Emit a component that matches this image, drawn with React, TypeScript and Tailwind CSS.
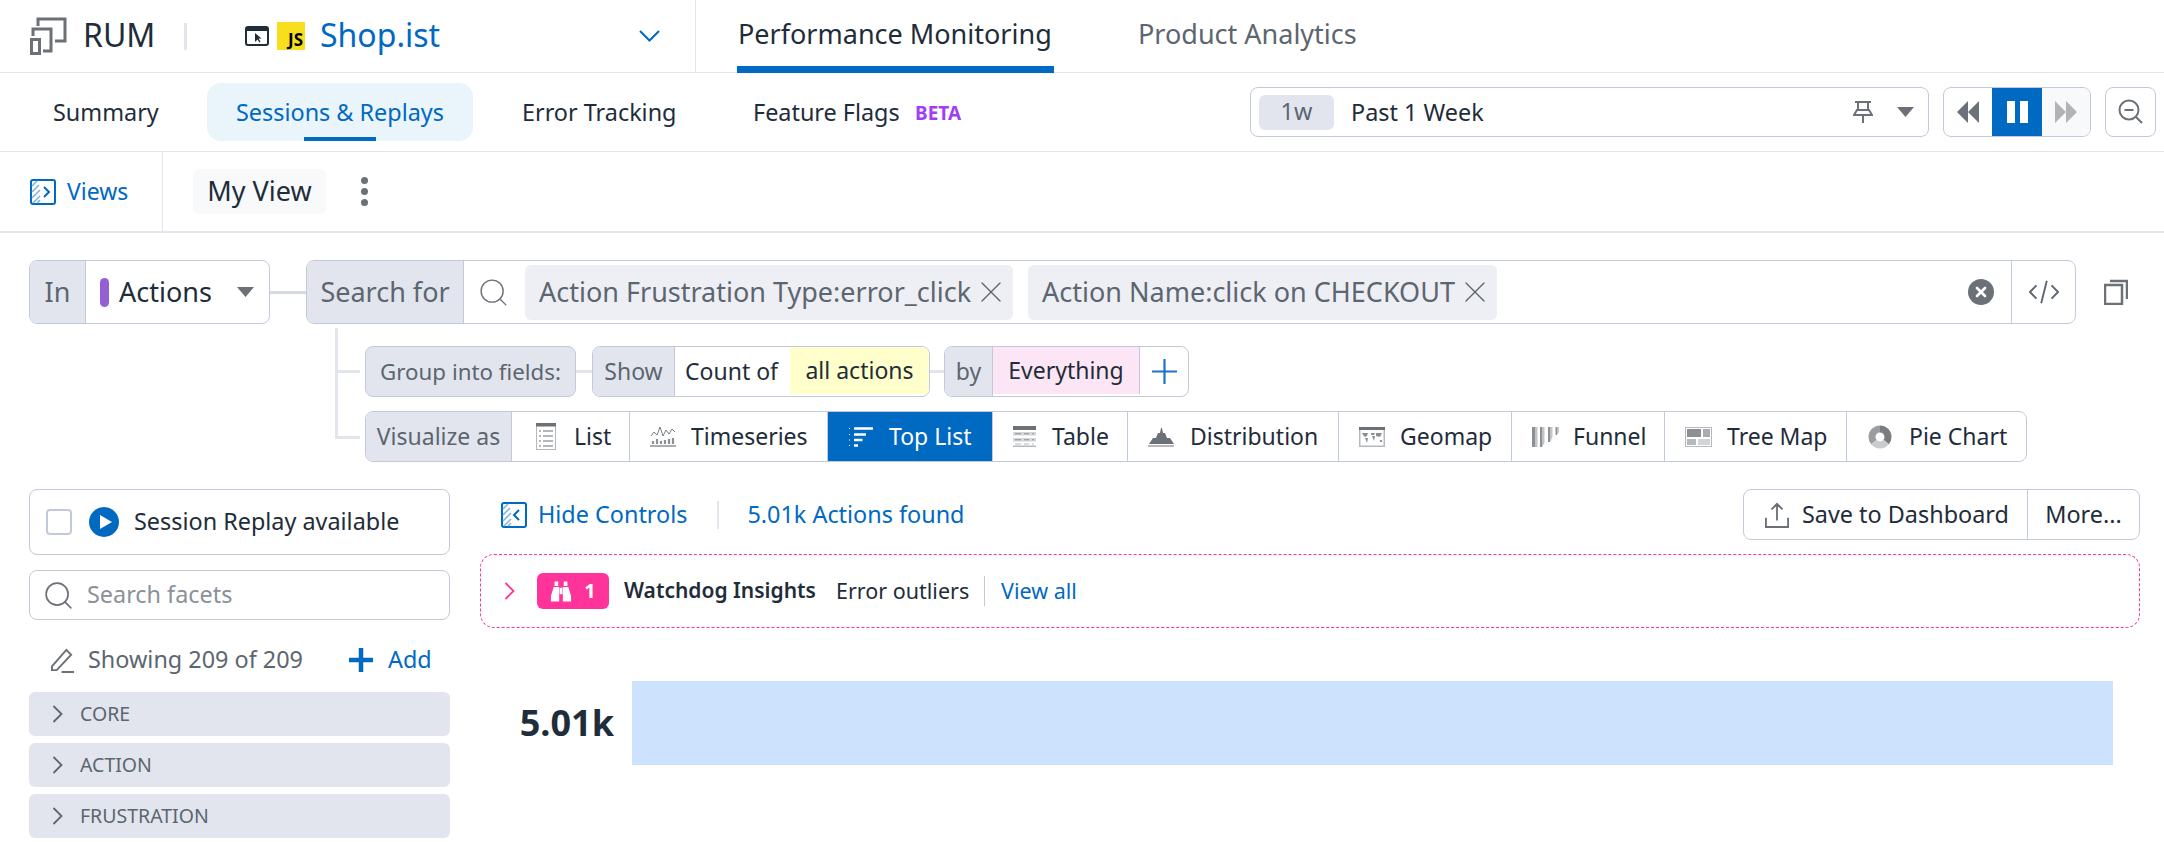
import { Search, X } from 'lucide-react';

const ink = 'text-[#1f2d3a]';

function Caret({ className = '' }: { className?: string }) {
  return (
    <svg width="17" height="10" viewBox="0 0 17 10" className={className}>
      <path d="M0 0h17l-8.500 10z" fill="#6b7177" />
    </svg>
  );
}

function Chevron({ color, className = '' }: { color: string; className?: string }) {
  return (
    <svg width="11" height="18" viewBox="0 0 11 18" fill="none" stroke={color} strokeWidth="1.8" className={className}>
      <path d="M1.500 1l8 8-8 8" />
    </svg>
  );
}

function RumLogo() {
  return (
    <svg width="38" height="38" viewBox="0 0 38 38" fill="none" stroke="#6b7177" strokeWidth="3">
      <path d="M9 9V2h27v22H26" />
      <path d="M4 19v-7h18v22h-8" />
      <rect x="2.500" y="22.500" width="8" height="14" />
    </svg>
  );
}

function PanelToggle({ left = false }: { left?: boolean }) {
  return (
    <svg width="26" height="26" viewBox="0 0 26 26" fill="none">
      <rect x="1" y="1" width="24" height="24" rx="2" stroke="#0069c2" strokeWidth="2" />
      <path d="M2 7l5-5M2 13l7-7M2 19l8-8M3 24l7-7M7 24l3-3" stroke="#7fb0de" strokeWidth="1.500" />
      <path d={left ? 'M18 8l-5 5 5 5' : 'M14 8l5 5-5 5'} stroke="#0069c2" strokeWidth="2" />
    </svg>
  );
}

function ChartIcon({ name, active = false }: { name: string; active?: boolean }) {
  const c = active ? '#ffffff' : '#6b7177';
  const l = '#b5b9bd';
  if (name === 'List')
    return (
      <svg width="20" height="27" viewBox="0 0 20 27">
        <rect x="0.500" y="0.500" width="19" height="26" fill="#fff" stroke={l} />
        <rect width="20" height="3.500" fill={c} />
        <path d="M3 8h2M7 8h10M3 13h2M7 13h10M3 18h2M7 18h10M3 23h2M7 23h10" stroke={c} strokeWidth="1.200" />
      </svg>
    );
  if (name === 'Timeseries')
    return (
      <svg width="26" height="21" viewBox="0 0 26 21" fill="none">
        <path d="M1 10l3-4 3 3 3-8 3 9 3-6 3 4 3-5 3 3" stroke={c} strokeWidth="0.900" />
        <path d="M3 18v-3M7 18v-5M11 18v-3M15 18v-4M19 18v-5M23 18v-6" stroke="#8c9094" strokeWidth="2.200" />
        <path d="M0 20h26" stroke="#8c9094" strokeWidth="1.500" />
      </svg>
    );
  if (name === 'Top List')
    return (
      <svg width="25" height="20" viewBox="0 0 25 20" fill="none" stroke={c} strokeWidth="2.500">
        <path d="M6 1.500h19M6 7.500h12M6 13h8.500M6 18.500h4" />
        <path d="M1 1.500h2M1 7.500h2M1 13h2M1 18.500h2" strokeWidth="1" strokeDasharray="1 1" />
      </svg>
    );
  if (name === 'Table')
    return (
      <svg width="23" height="21" viewBox="0 0 23 21">
        <rect width="23" height="4" fill={c} />
        <rect y="6" width="23" height="3.500" fill="#d5d7d9" />
        <rect y="12" width="23" height="3.500" fill="#d5d7d9" />
        <path d="M2 7.750h6M11 7.750h5M19 7.750h2M2 13.750h6M11 13.750h5M19 13.750h2" stroke="#8c9094" strokeWidth="1" />
        <path d="M2 18h6M11 18h5M19 18h2" stroke="#b5b9bd" strokeWidth="1" />
        <rect y="19.500" width="23" height="1.500" fill={l} />
      </svg>
    );
  if (name === 'Distribution')
    return (
      <svg width="26" height="20" viewBox="0 0 26 20">
        <path d="M1 17l4-6h3l2-5h2l1-5h1l1 5h2l2 5h3l4 6z" fill={c} />
        <rect y="18" width="26" height="2" fill={l} />
      </svg>
    );
  if (name === 'Geomap')
    return (
      <svg width="26" height="20" viewBox="0 0 26 20">
        <rect x="0.750" y="0.750" width="24.500" height="18.500" fill="#fff" stroke={l} strokeWidth="1.500" />
        <rect width="26" height="3" fill={c} />
        <path d="M3 6h6l-1 3-2 1-2-2zM6 11h3l-1 5zM12 6h4l-1 2h-3zM13 9h3l-1 5zM17 6h6l-2 4-4-1zM21 13h2v2h-2z" fill="#8c9094" />
      </svg>
    );
  if (name === 'Funnel')
    return (
      <svg width="27" height="20" viewBox="0 0 27 20">
        <path d="M0 0h3v20H0zM8 0h2v20H8zM16 0h2v15h-2zM23.500 0H25v8h-1.500z" fill="#8c9094" />
        <path d="M3 0h2.500v20H3zM10 0h2.500v16L10 20zM18 0h2.500v10L18 15zM25 0h2v5l-2 3z" fill="#c2c5c8" />
      </svg>
    );
  if (name === 'Tree Map')
    return (
      <svg width="27" height="20" viewBox="0 0 27 20">
        <rect x="0.500" y="0.500" width="26" height="19" fill="#fff" stroke={l} />
        <rect x="2" y="2" width="14" height="8" fill="#8c9094" />
        <rect x="18" y="2" width="7" height="8" fill="#a9adb0" />
        <rect x="2" y="12" width="9" height="6" fill="#b5b9bd" />
        <rect x="13" y="12" width="12" height="6" fill="#d2d4d6" />
      </svg>
    );
  return (
    <svg width="24" height="24" viewBox="0 0 24 24" fill="none" className="-rotate-90">
      <circle cx="12" cy="12" r="8" stroke="#787d81" strokeWidth="7" pathLength="100" strokeDasharray="36 64" />
      <circle cx="12" cy="12" r="8" stroke="#c9cbcd" strokeWidth="7" pathLength="100" strokeDasharray="28 72" strokeDashoffset="-36" />
      <circle cx="12" cy="12" r="8" stroke="#9a9ea1" strokeWidth="7" pathLength="100" strokeDasharray="36 64" strokeDashoffset="-64" />
    </svg>
  );
}

const chartTabs = [
  { name: 'List', cls: 'w-[118px] pl-[24px] gap-[18px]' },
  { name: 'Timeseries', cls: 'w-[198px] pl-[20px] gap-[15px]' },
  { name: 'Top List', cls: 'w-[165px] pl-[20px] gap-[16px]' },
  { name: 'Table', cls: 'w-[135px] pl-[20px] gap-[16px]' },
  { name: 'Distribution', cls: 'w-[211px] pl-[20px] gap-[16px]' },
  { name: 'Geomap', cls: 'w-[173px] pl-[20px] gap-[15px]' },
  { name: 'Funnel', cls: 'w-[153px] pl-[20px] gap-[14px]' },
  { name: 'Tree Map', cls: 'w-[182px] pl-[20px] gap-[15px]' },
  { name: 'Pie Chart', cls: 'w-[180px] pl-[21px] gap-[17px]' },
];

function FacetGroup({ label }: { label: string }) {
  return (
    <div className="h-[44px] rounded-[6px] bg-[#e2e5ed] flex items-center pl-[23px] text-[19.5px] text-[#5c6670]">
      <Chevron color="#5c6670" />
      <span className="ml-[17px]">{label}</span>
    </div>
  );
}

function Pill({ text }: { text: string }) {
  return (
    <div className="h-[55px] rounded-[6px] bg-[#eeeff4] flex items-center pl-[14px] pr-[4px] gap-[2px] text-[#5c6670]">
      <span>{text}</span>
      <X size={36} strokeWidth={0.9} className="text-[#5c6670]" />
    </div>
  );
}

export default function App() {
  return (
    <div className={`w-[2164px] h-[842px] overflow-hidden bg-white text-[23.4px] ${ink} font-['Noto_Sans','Open_Sans',sans-serif]`}>
      {/* Product bar */}
      <div className="h-[73px] border-b border-[#e2e5ed] flex">
        <div className="w-[696px] shrink-0 border-r border-[#e2e5ed] flex items-center pl-[29px]">
          <RumLogo />
          <span className="ml-[16px] w-[71px] text-[32px] leading-none pb-[2px]">RUM</span>
          <div className="ml-[30px] w-[3px] h-[27px] bg-[#e2e5ed]" />
          <svg width="24" height="20" viewBox="0 0 24 20" fill="none" className="ml-[58px]">
            <rect x="1" y="1" width="22" height="18" rx="2" stroke="#1f2d3a" strokeWidth="2" />
            <rect x="1" y="1" width="22" height="4" fill="#1f2d3a" />
            <path d="M10 7v9l2.500-2.500 2 3 1-1-2-3h3z" fill="#1f2d3a" />
          </svg>
          <div className="ml-[8px] w-[28px] h-[28px] bg-[#f7df1e] flex items-end justify-end pr-[2px] font-bold text-[17px] leading-[20px] text-black">JS</div>
          <span className="ml-[15px] w-[118px] text-[32px] leading-none text-[#0069c2] pb-[2px]">Shop.ist</span>
          <svg width="21" height="12" viewBox="0 0 21 12" fill="none" stroke="#0069c2" strokeWidth="2" className="ml-[201px]">
            <path d="M1 1l9.500 9.500L20 1" />
          </svg>
        </div>
        <div className="relative ml-[41px] h-full flex items-center pb-[4px] pl-[1px] text-[27px] w-[317px]">
          Performance Monitoring
          <div className="absolute left-0 right-0 bottom-[-1px] h-[7px] bg-[#0069c2]" />
        </div>
        <div className="ml-[84px] h-full flex items-center pb-[4px] text-[27px] text-[#5c6670]">Product Analytics</div>
      </div>

      {/* Tabs and time controls */}
      <div className="h-[79px] border-b border-[#e2e5ed] flex items-center">
        <div className="ml-[53px] w-[154px] pt-[2px]">Summary</div>
        <div className="relative w-[266px] h-[58px] rounded-[14px] bg-[#e9f4fb] flex items-center justify-center pt-[2px] text-[#0069c2]">
          Sessions &amp; Replays
          <div className="absolute bottom-0 left-[97px] w-[72px] h-[4px] bg-[#0069c2]" />
        </div>
        <div className="ml-[49px] w-[231px] pt-[2px]">Error Tracking</div>
        <div className="w-[162px] pt-[2px]">Feature Flags</div>
        <div className="w-[73px] pt-[2px] text-[19px] font-bold text-[#a33df5]">BETA</div>
        <div className="ml-[262px] w-[679px] h-[50px] rounded-[8px] border border-[#c3c9dc] flex items-center pl-[8px] pr-[14px]">
          <div className="w-[75px] h-[35px] rounded-[6px] bg-[#e2e5ed] flex items-center justify-center text-[#5c6670]">1w</div>
          <span className="ml-[17px] pt-[2px]">Past 1 Week</span>
          <svg width="20" height="22" viewBox="0 0 20 22" fill="none" stroke="#6b7177" strokeWidth="2" className="ml-auto mr-[24px]">
            <path d="M2 1h16M5 1v8M15 1v8M1 14l3-5h12l3 5zM1 14h18M10 14v8" />
          </svg>
          <Caret />
        </div>
        <div className="ml-[14px] w-[148px] h-[50px] rounded-[8px] border border-[#c3c9dc] flex overflow-hidden">
          <div className="w-[48px] flex items-center justify-center">
            <svg width="24" height="22" viewBox="0 0 24 22" fill="#6b7177"><path d="M12 0v22L1 11zM23 0v22L12 11z" /></svg>
          </div>
          <div className="w-[50px] bg-[#0069c2] flex items-center justify-center gap-[5px]">
            <div className="w-[8px] h-[22px] bg-white" />
            <div className="w-[8px] h-[22px] bg-white" />
          </div>
          <div className="flex-1 bg-[#f8f9fb] flex items-center justify-center">
            <svg width="24" height="22" viewBox="0 0 24 22" fill="#b0b4b8"><path d="M1 0v22l11-11zM12 0v22l11-11z" /></svg>
          </div>
        </div>
        <div className="ml-[14px] w-[51px] h-[50px] rounded-[8px] border border-[#c3c9dc] flex items-center justify-center">
          <svg width="26" height="26" viewBox="0 0 26 26" fill="none" stroke="#6b7177" strokeWidth="2">
            <circle cx="11" cy="11" r="9.500" />
            <path d="M6.500 11h9M18 18l6 6" />
          </svg>
        </div>
      </div>

      {/* Views bar */}
      <div className="h-[81px] border-b-[2px] border-[#e3e6ea] flex items-center">
        <div className="w-[163px] h-full border-r border-[#e2e5ed] flex items-center pl-[30px] gap-[11px] text-[#0069c2] text-[23px]">
          <PanelToggle />
          Views
        </div>
        <div className="ml-[30px] w-[133px] h-[45px] rounded-[6px] bg-[#f8f9fb] flex items-center justify-center text-[27px]">My View</div>
        <div className="ml-[35px] flex flex-col gap-[4px]">
          <div className="w-[7px] h-[7px] rounded-full bg-[#6b7177]" />
          <div className="w-[7px] h-[7px] rounded-full bg-[#6b7177]" />
          <div className="w-[7px] h-[7px] rounded-full bg-[#6b7177]" />
        </div>
      </div>

      {/* Query builder */}
      <div className="relative pt-[27px] h-[256px]">
        <div className="flex items-center pl-[29px]">
          <div className="w-[241px] h-[64px] rounded-[8px] border border-[#c3c9dc] flex overflow-hidden text-[27px]">
            <div className="w-[56px] bg-[#e2e5ed] border-r border-[#c3c9dc] flex items-center justify-center text-[#5c6670]">In</div>
            <div className="flex-1 flex items-center pl-[14px] pr-[15px]">
              <div className="w-[9px] h-[29px] rounded-full bg-[#955fd6]" />
              <span className="ml-[10px]">Actions</span>
              <Caret className="ml-auto" />
            </div>
          </div>
          <div className="w-[36px] h-[3px] bg-[#d5d9e4]" />
          <div className="w-[1770px] h-[64px] rounded-[8px] border border-[#c3c9dc] flex items-center overflow-hidden text-[27px]">
            <div className="w-[157px] h-full bg-[#e2e5ed] border-r border-[#c3c9dc] flex items-center justify-center text-[#5c6670]">Search for</div>
            <Search size={33} strokeWidth={1} className="ml-[13px] mr-[15px] text-[#6b7177]" />
            <Pill text="Action Frustration Type:error_click" />
            <div className="w-[15px]" />
            <Pill text="Action Name:click on CHECKOUT" />
            <div className="ml-auto mr-[17px] w-[26px] h-[26px] rounded-full bg-[#6b7177] flex items-center justify-center">
              <X size={16} strokeWidth={4} className="text-white" />
            </div>
            <div className="w-[64px] h-full border-l border-[#c3c9dc] flex items-center justify-center">
              <svg width="30" height="26" viewBox="0 0 32 26" fill="none" stroke="#5c6670" strokeWidth="2">
                <path d="M8 6l-7 7 7 7M24 6l7 7-7 7M19 1l-6 24" />
              </svg>
            </div>
          </div>
          <svg width="24" height="26" viewBox="0 0 24 26" fill="none" stroke="#6b7177" strokeWidth="2.500" className="ml-[28px]">
            <rect x="1" y="6" width="17" height="19" />
            <path d="M6 2h17v18" />
          </svg>
        </div>

        {/* tree connector */}
        <div className="absolute left-[335px] top-[95px] w-[3px] h-[110px] bg-[#e2e5ed]" />
        <div className="absolute left-[335px] top-[137px] w-[25px] h-[3px] bg-[#e2e5ed]" />
        <div className="absolute left-[335px] top-[203px] w-[25px] h-[3px] bg-[#e2e5ed]" />

        <div className="ml-[365px] mt-[22px] flex items-center text-[23px]">
          <div className="w-[211px] h-[51px] rounded-[8px] border border-[#c3c9dc] bg-[#e2e5ed] flex items-center justify-center text-[22.3px] text-[#5c6670]">Group into fields:</div>
          <div className="w-[16px] h-[3px] bg-[#e2e5ed]" />
          <div className="w-[338px] h-[51px] rounded-[8px] border border-[#c3c9dc] flex overflow-hidden">
            <div className="w-[82px] bg-[#e2e5ed] border-r border-[#c3c9dc] flex items-center justify-center text-[#5c6670]">Show</div>
            <div className="w-[115px] flex items-center pl-[10px]">Count of</div>
            <div className="flex-1 bg-[#ffffcc] flex items-center justify-center mb-[2px]">all actions</div>
          </div>
          <div className="w-[14px] h-[3px] bg-[#e2e5ed]" />
          <div className="w-[245px] h-[51px] rounded-[8px] border border-[#c3c9dc] flex overflow-hidden">
            <div className="w-[48px] bg-[#e2e5ed] border-r border-[#c3c9dc] flex items-center justify-center text-[#5c6670]">by</div>
            <div className="w-[147px] bg-[#fce6f5] border-r border-[#c3c9dc] flex items-center justify-center mb-[2px]">Everything</div>
            <div className="flex-1 flex items-center justify-center">
              <svg width="25" height="25" viewBox="0 0 25 25" fill="none" stroke="#1d72c8" strokeWidth="2.200">
                <path d="M12.500 0v25M0 12.500h25" />
              </svg>
            </div>
          </div>
        </div>

        <div className="ml-[365px] mt-[14px] w-[1662px] h-[51px] rounded-[8px] border border-[#c3c9dc] flex overflow-hidden text-[23px]">
          <div className="w-[146px] shrink-0 bg-[#e2e5ed] border-r border-[#c3c9dc] flex items-center justify-center text-[#5c6670]">Visualize as</div>
          {chartTabs.map((tab) => {
            const active = tab.name === 'Top List';
            return (
              <div
                key={tab.name}
                className={`${tab.cls} shrink-0 border-r last:border-r-0 border-[#c3c9dc] flex items-center ${active ? 'bg-[#0069c2] text-white' : ''}`}
              >
                <ChartIcon name={tab.name} active={active} />
                {tab.name}
              </div>
            );
          })}
        </div>
      </div>

      {/* Facets and results */}
      <div className="flex pl-[29px]">
        <div className="w-[421px] shrink-0 flex flex-col">
          <div className="h-[66px] rounded-[8px] border border-[#c3c9dc] flex items-center pl-[16px]">
            <div className="w-[26px] h-[26px] rounded-[4px] border-[2px] border-[#c3c9dc]" />
            <svg width="30" height="30" viewBox="0 0 30 30" className="ml-[17px]">
              <circle cx="15" cy="15" r="15" fill="#0069c2" />
              <path d="M11 8l12 7-12 7z" fill="#fff" />
            </svg>
            <span className="ml-[15px]">Session Replay available</span>
          </div>
          <div className="mt-[15px] h-[50px] rounded-[8px] border border-[#c3c9dc] flex items-center pl-[12px] text-[#8a9199]">
            <Search size={33} strokeWidth={1.2} className="text-[#6b7177]" />
            <span className="ml-[12px]">Search facets</span>
          </div>
          <div className="mt-[22px] h-[36px] flex items-center pl-[21px] text-[#5c6670]">
            <svg width="25" height="25" viewBox="0 0 26 26" fill="none" stroke="#6b7177" strokeWidth="2">
              <path d="M2 19L17 2l5 5L7 23H2zM12 25h13" />
            </svg>
            <span className="ml-[13px]">Showing 209 of 209</span>
            <svg width="24" height="24" viewBox="0 0 24 24" fill="none" stroke="#0069c2" strokeWidth="4.500" className="ml-[46px]">
              <path d="M12 0v24M0 12h24" />
            </svg>
            <span className="ml-[15px] text-[#0069c2]">Add</span>
          </div>
          <div className="mt-[14px] flex flex-col gap-[7px]">
            <FacetGroup label="CORE" />
            <FacetGroup label="ACTION" />
            <FacetGroup label="FRUSTRATION" />
          </div>
        </div>

        <div className="ml-[30px] w-[1660px] flex flex-col">
          <div className="h-[51px] flex items-center pl-[21px]">
            <PanelToggle left />
            <span className="ml-[11px] text-[#0069c2]">Hide Controls</span>
            <div className="ml-[30px] w-[2px] h-[28px] bg-[#e2e5ed]" />
            <span className="ml-[28px] text-[#0069c2]">5.01k Actions found</span>
            <div className="ml-auto w-[397px] h-[51px] rounded-[8px] border border-[#c3c9dc] flex">
              <div className="w-[284px] border-r border-[#c3c9dc] flex items-center pl-[21px]">
                <svg width="24" height="26" viewBox="0 0 26 28" fill="none" stroke="#6b7177" strokeWidth="2">
                  <path d="M13 20V2M7 8l6-6 6 6M1 17v10h24V17" />
                </svg>
                <span className="ml-[13px]">Save to Dashboard</span>
              </div>
              <div className="flex-1 flex items-center justify-center">More...</div>
            </div>
          </div>
          <div className="mt-[14px] h-[74px] rounded-[14px] border border-dashed border-[#ff3399] flex items-center pl-[23px] text-[21.5px] whitespace-nowrap">
            <Chevron color="#ff3399" />
            <div className="ml-[22px] w-[72px] h-[36px] rounded-[6px] bg-[#ff3399] flex items-center justify-center gap-[12px] text-white font-bold text-[20px]">
              <svg width="22" height="21" viewBox="0 0 24 22" fill="#fff">
                <path d="M5 0h4v5H5zM15 0h4v5h-4zM4 6h6v16H1v-6zM14 6h6l3 10v6h-9zM10.500 7h3v7h-3z" />
              </svg>
              1
            </div>
            <span className="ml-[15px] w-[192px] font-semibold text-[21px]">Watchdog Insights</span>
            <span className="ml-[20px] w-[132px]">Error outliers</span>
            <div className="ml-[16px] w-[1px] h-[30px] bg-[#c3c9dc]" />
            <span className="ml-[16px] text-[#0069c2]">View all</span>
          </div>
          <div className="mt-[53px] flex items-center">
            <div className="w-[134px] text-right text-[36px] font-bold leading-none">5.01k</div>
            <div className="ml-[18px] w-[1481px] h-[84px] bg-[#cde2fd]" />
          </div>
        </div>
      </div>
    </div>
  );
}
